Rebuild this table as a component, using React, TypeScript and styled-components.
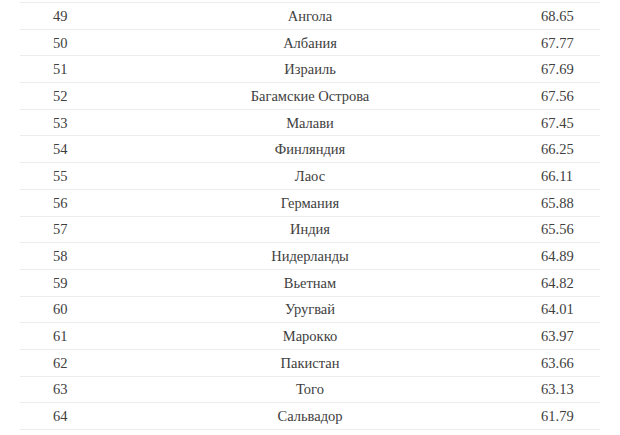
import React from "react";
import styled, { createGlobalStyle } from "styled-components";

const Global = createGlobalStyle`
  html, body { margin: 0; padding: 0; background: #ffffff; }
`;

const Wrap = styled.div`
  padding: 2px 20px 0 20px;
  width: 580px;
`;

const Table = styled.div`
  display: flex;
  flex-direction: column;
  border-bottom: 1px solid #ececec;
`;

const Row = styled.div`
  display: grid;
  grid-template-columns: 92px 1fr 92px;
  align-items: center;
  height: 26.69px;
  box-sizing: border-box;
  border-top: 1px solid #ececec;
  font-family: "Liberation Serif", "Times New Roman", serif;
  font-size: 14.5px;
  color: #404040;
`;

const Cell = styled.div<{ $align: "left" | "center" }>`
  text-align: ${(p) => p.$align};
  padding-left: ${(p) => (p.$align === "left" ? "33px" : "0")};
  padding-top: 1px;
  white-space: nowrap;
`;

const data: [number, string, string][] = [
  [49, "Ангола", "68.65"],
  [50, "Албания", "67.77"],
  [51, "Израиль", "67.69"],
  [52, "Багамские Острова", "67.56"],
  [53, "Малави", "67.45"],
  [54, "Финляндия", "66.25"],
  [55, "Лаос", "66.11"],
  [56, "Германия", "65.88"],
  [57, "Индия", "65.56"],
  [58, "Нидерланды", "64.89"],
  [59, "Вьетнам", "64.82"],
  [60, "Уругвай", "64.01"],
  [61, "Марокко", "63.97"],
  [62, "Пакистан", "63.66"],
  [63, "Того", "63.13"],
  [64, "Сальвадор", "61.79"],
];

export default function App() {
  return (
    <>
      <Global />
      <Wrap>
        <Table>
          {data.map(([n, name, v]) => (
            <Row key={n}>
              <Cell $align="left">{n}</Cell>
              <Cell $align="center">{name}</Cell>
              <Cell $align="left">{v}</Cell>
            </Row>
          ))}
        </Table>
      </Wrap>
    </>
  );
}
